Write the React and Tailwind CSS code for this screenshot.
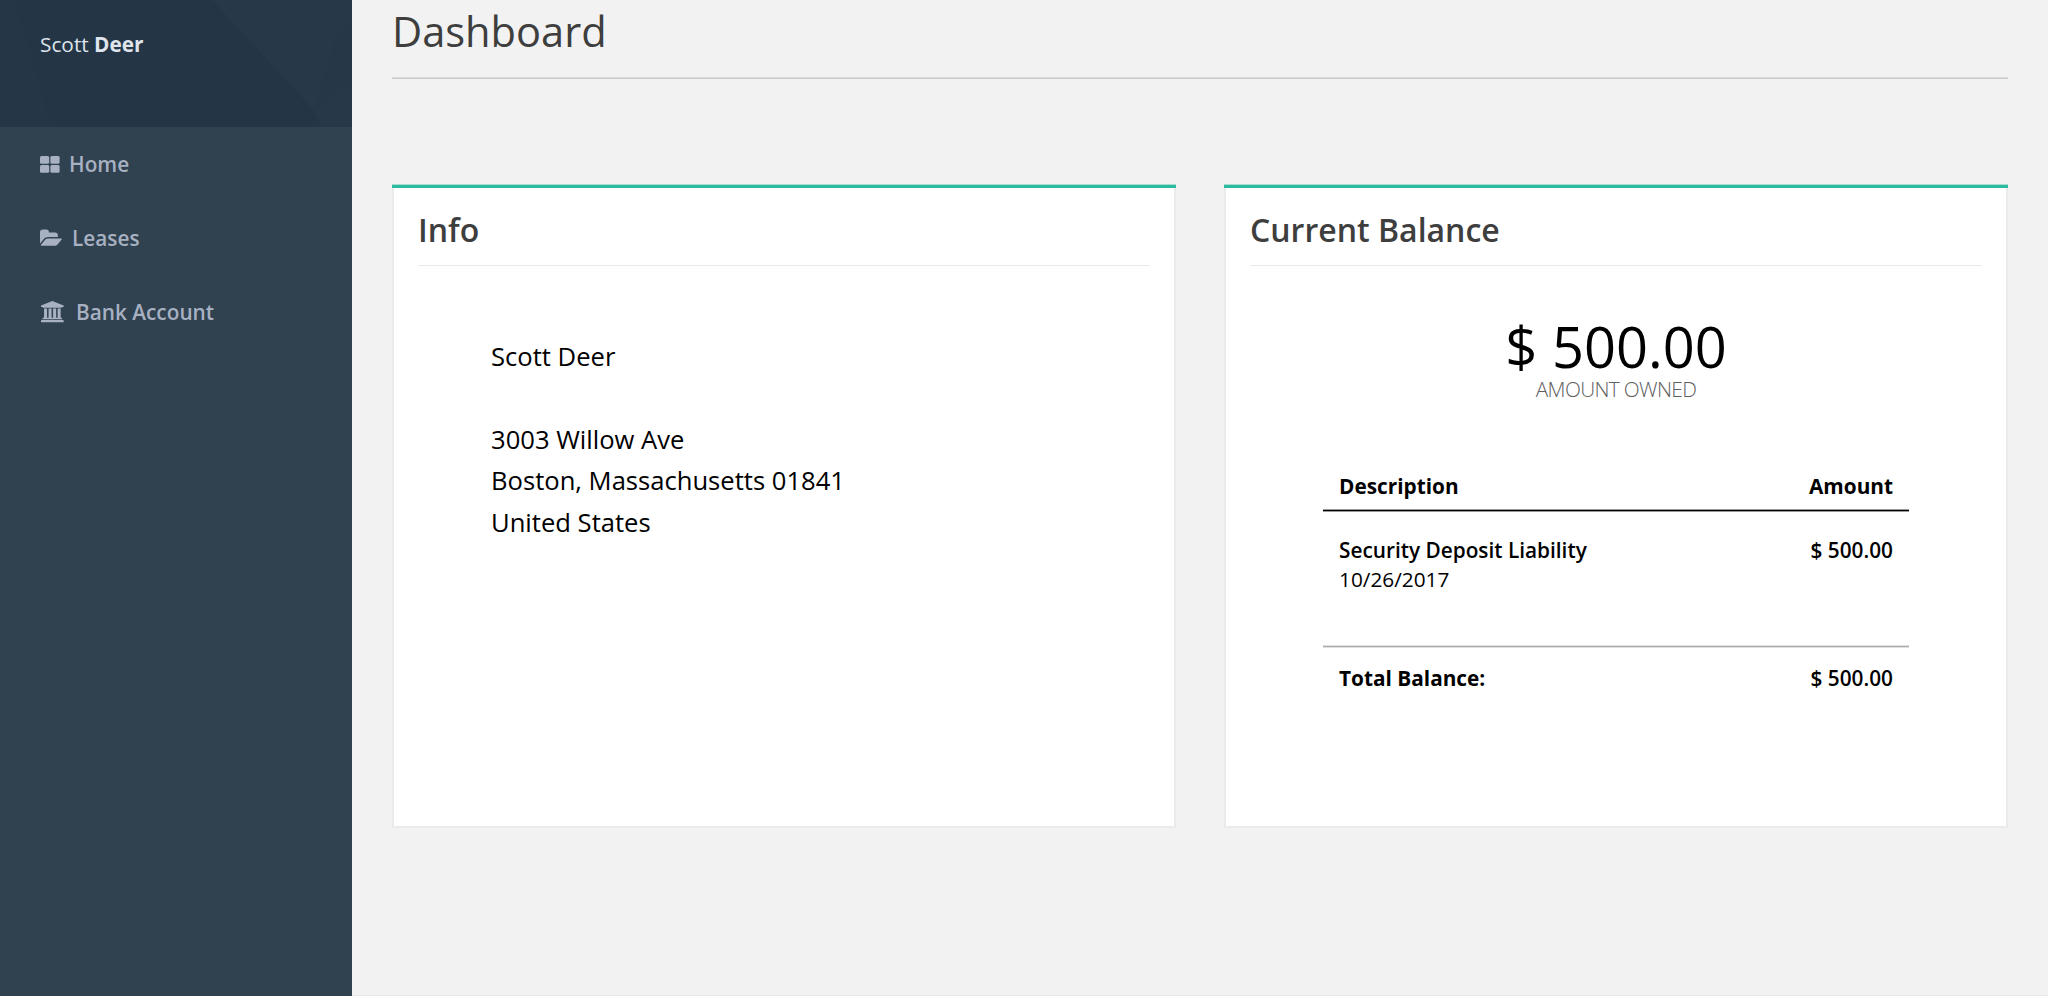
function GridIcon() {
  return (
    <svg className="h-[17px] w-[20px]" viewBox="0 0 20 17" fill="currentColor">
      <rect x="0" y="0" width="9.2" height="7.7" rx="1.5" />
      <rect x="10.4" y="0" width="9.2" height="7.7" rx="1.5" />
      <rect x="0" y="9" width="9.2" height="7.7" rx="1.5" />
      <rect x="10.4" y="9" width="9.2" height="7.7" rx="1.5" />
    </svg>
  );
}

function FolderOpenIcon() {
  return (
    <svg className="h-[20.8px] w-[22.3px]" viewBox="0 0 1920 1792" fill="currentColor">
      <path d="M1879 952q0 31-31 66l-336 396q-43 51-120.5 86.500t-143.500 35.500h-1088q-34 0-60.500-13t-26.500-43q0-31 31-66l336-396q43-51 120.500-86.500t143.500-35.500h1088q34 0 60.500 13t26.500 43zm-343-344v160h-832q-94 0-197 47.500t-164 119.500l-337 396-5 6q0-4-.5-12.500t-.5-12.500v-960q0-92 66-158t158-66h320q92 0 158 66t66 158v32h544q92 0 158 66t66 158z" />
    </svg>
  );
}

function BankIcon() {
  return (
    <svg className="h-[21.2px] w-[22.7px]" viewBox="0 0 1920 1792" fill="currentColor">
      <path d="M960 0l960 384v128h-128q0 26-20.500 45t-48.500 19h-1526q-28 0-48.500-19t-20.500-45h-128v-128zm-704 640h256v768h128v-768h256v768h128v-768h256v768h128v-768h256v768h59q28 0 48.500 19t20.500 45v64h-1664v-64q0-26 20.500-45t48.500-19h59v-768zm1595 960q28 0 48.500 19t20.500 45v128h-1920v-128q0-26 20.500-45t48.500-19h1782z" />
    </svg>
  );
}

function NavItem({ icon, iconClass, children }) {
  return (
    <a className="flex h-[74px] items-center pl-10 text-[20.8px] font-semibold text-[#a7b1c2]">
      <span className={"flex shrink-0 items-center " + iconClass}>{icon}</span>
      <span className="pt-[2px]">{children}</span>
    </a>
  );
}

function Card({ title, children }) {
  return (
    <section className="flex h-[644px] w-[784px] flex-col">
      <div className="h-px bg-[#a5ded3]" />
      <div className="h-[3px] bg-[#2dbaa0]" />
      <div className="flex-1 border-x-2 border-b-2 border-[#e9ebec] bg-white px-6">
        <h2 className="flex h-[78px] items-center border-b border-[#e7eaec] pt-[7px] text-[32px] font-semibold leading-none text-[#3e3e3e]">
          {title}
        </h2>
        {children}
      </div>
    </section>
  );
}

function Sidebar() {
  return (
    <aside className="w-[352px] shrink-0 bg-[#30414f]">
      <div className="relative h-[127px] bg-[#243646]">
        <svg className="absolute inset-0 h-full w-full" viewBox="0 0 352 127">
          <polygon points="0,0 14,0 42,90 50,127 0,127" fill="#253747" />
          <polygon points="110,0 212,0 314,111 322,127 200,127" fill="#243645" />
          <polygon points="212,0 352,0 352,80 314,111" fill="#273848" />
          <polygon points="352,20 352,80 314,111 335,40" fill="#263747" />
          <polygon points="314,111 352,80 352,127 322,127" fill="#273949" />
        </svg>
        <div className="relative pl-10 pt-[29px] text-[20.8px] leading-[31px] text-[#dfe4ed]">
          Scott <span className="font-bold">Deer</span>
        </div>
      </div>
      <nav>
        <NavItem icon={<GridIcon />} iconClass="w-[29px]">Home</NavItem>
        <NavItem icon={<FolderOpenIcon />} iconClass="w-[32px]">Leases</NavItem>
        <NavItem icon={<BankIcon />} iconClass="w-[36px] pl-px">Bank Account</NavItem>
      </nav>
    </aside>
  );
}

export default function App() {
  return (
    <div className="flex h-[996px] w-[2048px] overflow-hidden bg-[#f2f2f2] font-['Open_Sans','Noto_Sans',sans-serif] text-black">
      <Sidebar />
      <main className="flex flex-1 flex-col border-b border-[#e7eaec] px-10">
        <h1 className="h-[77px] pt-2 text-[41.6px] leading-[46px] text-[#3e3e3e]">Dashboard</h1>
        <div className="h-[2px] border-b border-[#cacaca] bg-[#dddddd]" />
        <div className="mt-[105px] flex justify-between">
          <Card title="Info">
            <div className="pl-[73px] pt-[69.5px] text-[25.6px] leading-[41.6px]">
              <p>Scott Deer</p>
              <p className="mt-[41.6px]">3003 Willow Ave</p>
              <p>Boston, Massachusetts 01841</p>
              <p>United States</p>
            </div>
          </Card>
          <Card title="Current Balance">
            <div className="pt-[49px] text-center">
              <p className="text-[56px] leading-[62px]">$ 500.00</p>
              <p className="text-[20.8px] font-light leading-[24px] tracking-[-0.65px] text-[#606060]">
                AMOUNT OWNED
              </p>
            </div>
            <div className="mx-[73px] mt-[71px] text-[20.8px] leading-[29px]">
              <div className="flex h-[37px] justify-between px-4 font-bold">
                <span>Description</span>
                <span>Amount</span>
              </div>
              <div className="h-[3px] border-y border-[#999999] bg-black" />
              <div className="flex h-[133px] justify-between px-4 pt-[24px]">
                <div>
                  <p className="font-semibold">Security Deposit Liability</p>
                  <p>10/26/2017</p>
                </div>
                <span className="font-semibold">$ 500.00</span>
              </div>
              <div className="h-[3px] border-y border-[#e0e0e0] bg-[#aaaaaa]" />
              <div className="flex justify-between px-4 pt-[16px]">
                <span className="font-bold">Total Balance:</span>
                <span className="font-semibold">$ 500.00</span>
              </div>
            </div>
          </Card>
        </div>
      </main>
    </div>
  );
}
